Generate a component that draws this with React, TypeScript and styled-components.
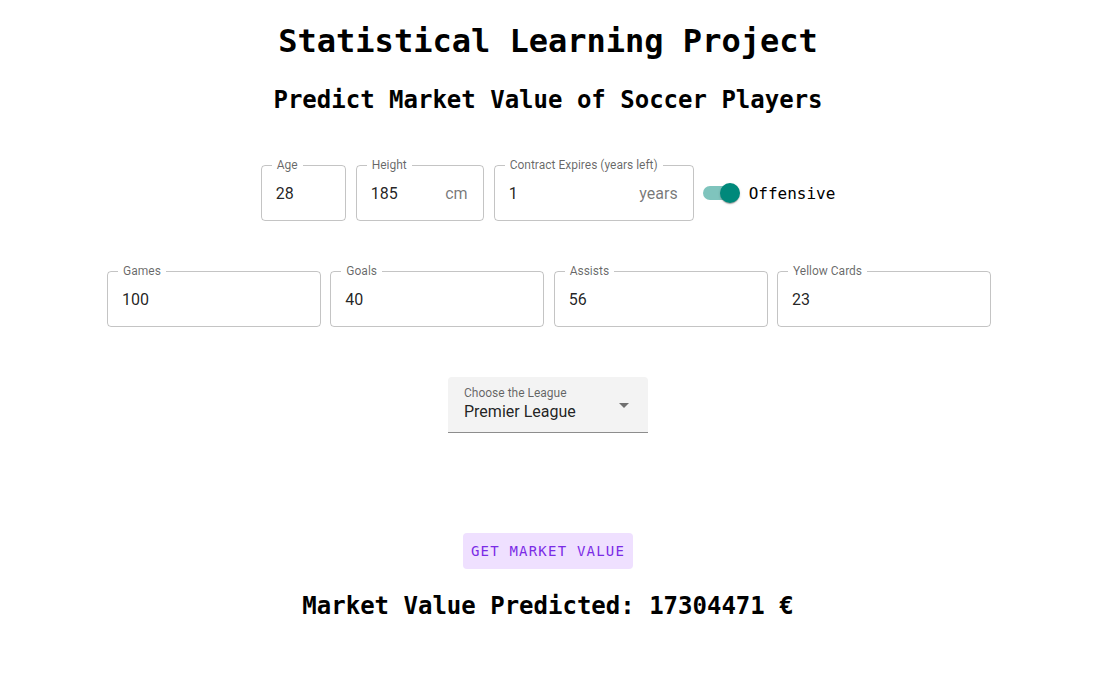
import React, { useState } from "react";
import styled, { createGlobalStyle } from "styled-components";

const Global = createGlobalStyle`
  html, body { margin: 0; padding: 0; background: #ffffff; }
  * { box-sizing: border-box; }
`;

const mono = `"DejaVu Sans Mono", "Liberation Mono", monospace`;
const roboto = `Roboto, "Noto Sans", Arial, sans-serif`;

const Page = styled.main`
  display: flex;
  flex-direction: column;
  align-items: center;
  padding-top: 22px;
  font-family: ${mono};
  color: #000;
`;

const Title = styled.h1`
  margin: 0;
  font-size: 32px;
  line-height: 38.4px;
  font-weight: 700;
`;

const Subtitle = styled.h2`
  margin: 25.6px 0 0;
  font-size: 24px;
  line-height: 28.8px;
  font-weight: 700;
`;

const Row = styled.div<{ $top: number; $gap: number; $shift?: number }>`
  display: flex;
  align-items: center;
  justify-content: center;
  gap: ${(p) => p.$gap}px;
  margin-top: ${(p) => p.$top}px;
  padding-left: ${(p) => p.$shift ?? 0}px;
`;

const Field = styled.label<{ $w: number }>`
  position: relative;
  display: flex;
  align-items: center;
  width: ${(p) => p.$w}px;
  height: 56px;
  border: 1px solid rgba(0, 0, 0, 0.23);
  border-radius: 4px;
  padding: 1px 15px 0 14px;
  font-family: ${roboto};
`;

const FieldLabel = styled.span`
  position: absolute;
  top: -8px;
  left: 10px;
  padding: 0 5px;
  background: #fff;
  font-size: 12px;
  line-height: 14px;
  color: rgba(0, 0, 0, 0.6);
  white-space: nowrap;
`;

const Input = styled.input`
  flex: 1;
  min-width: 0;
  border: 0;
  outline: none;
  padding: 0;
  background: transparent;
  font-family: ${roboto};
  font-size: 16px;
  color: rgba(0, 0, 0, 0.87);
`;

const Adornment = styled.span`
  margin-left: 8px;
  font-size: 16px;
  color: rgba(0, 0, 0, 0.54);
`;

const SwitchWrap = styled.label`
  display: flex;
  align-items: center;
  margin-left: -13px;
  cursor: pointer;
`;

const SwitchRoot = styled.span`
  position: relative;
  display: inline-flex;
  width: 58px;
  height: 38px;
  padding: 12px;
`;

const Track = styled.span<{ $on: boolean }>`
  width: 100%;
  height: 100%;
  border-radius: 7px;
  background: ${(p) => (p.$on ? "#00897b" : "#000")};
  opacity: ${(p) => (p.$on ? 0.5 : 0.38)};
`;

const Thumb = styled.span<{ $on: boolean }>`
  position: absolute;
  top: 9px;
  left: ${(p) => (p.$on ? 29 : 9)}px;
  width: 20px;
  height: 20px;
  border-radius: 50%;
  background: ${(p) => (p.$on ? "#00897b" : "#fafafa")};
  box-shadow: 0 2px 1px -1px rgba(0, 0, 0, 0.2), 0 1px 1px 0 rgba(0, 0, 0, 0.14),
    0 1px 3px 0 rgba(0, 0, 0, 0.12);
`;

const SwitchText = styled.span`
  font-family: ${mono};
  font-size: 16px;
  margin-top: 2px;
  color: #000;
`;

const Select = styled.div`
  position: relative;
  display: flex;
  flex-direction: column;
  justify-content: flex-start;
  width: 200px;
  height: 56px;
  margin-top: 50px;
  padding: 9px 16px 0;
  background: #f3f3f3;
  border-radius: 4px 4px 0 0;
  border-bottom: 1px solid rgba(0, 0, 0, 0.42);
  font-family: ${roboto};
`;

const SelectLabel = styled.span`
  font-size: 12px;
  line-height: 14px;
  color: rgba(0, 0, 0, 0.6);
`;

const SelectValue = styled.span`
  margin-top: 2px;
  font-size: 16px;
  line-height: 20px;
  color: rgba(0, 0, 0, 0.87);
`;

const Arrow = styled.svg`
  position: absolute;
  right: 12px;
  top: 16px;
  width: 24px;
  height: 24px;
  fill: rgba(0, 0, 0, 0.54);
`;

const Button = styled.button`
  margin-top: 100px;
  width: 170px;
  height: 36px;
  border: 0;
  border-radius: 4px;
  background: #efe0ff;
  color: #7b2be6;
  font-family: ${mono};
  font-size: 14px;
  letter-spacing: 1.2px;
  font-weight: 500;
  text-transform: uppercase;
  cursor: pointer;
`;

const Result = styled.h2`
  margin: 23px 0 0;
  font-size: 24px;
  line-height: 28.8px;
  font-weight: 700;
`;

type F = { label: string; value: string; width: number; unit?: string };

const OutlinedField = ({ label, value, width, unit }: F) => {
  const [v, setV] = useState(value);
  return (
    <Field $w={width}>
      <FieldLabel>{label}</FieldLabel>
      <Input value={v} onChange={(e) => setV(e.target.value)} />
      {unit && <Adornment>{unit}</Adornment>}
    </Field>
  );
};

export default function App() {
  const [on, setOn] = useState(true);
  return (
    <>
      <Global />
      <Page>
        <Title>Statistical Learning Project</Title>
        <Subtitle>Predict Market Value of Soccer Players</Subtitle>
        <Row $top={50} $gap={10}>
          <OutlinedField label="Age" value="28" width={85} />
          <OutlinedField label="Height" value="185" width={128} unit="cm" />
          <OutlinedField label="Contract Expires (years left)" value="1" width={200} unit="years" />
          <SwitchWrap onClick={() => setOn(!on)}>
            <SwitchRoot>
              <Track $on={on} />
              <Thumb $on={on} />
            </SwitchRoot>
            <SwitchText>Offensive</SwitchText>
          </SwitchWrap>
        </Row>
        <Row $top={50} $gap={9.3} $shift={2}>
          <OutlinedField label="Games" value="100" width={214} />
          <OutlinedField label="Goals" value="40" width={214} />
          <OutlinedField label="Assists" value="56" width={214} />
          <OutlinedField label="Yellow Cards" value="23" width={214} />
        </Row>
        <Select>
          <SelectLabel>Choose the League</SelectLabel>
          <SelectValue>Premier League</SelectValue>
          <Arrow viewBox="0 0 24 24">
            <path d="M7 10l5 5 5-5z" />
          </Arrow>
        </Select>
        <Button>Get Market Value</Button>
        <Result>Market Value Predicted: 17304471 €</Result>
      </Page>
    </>
  );
}
